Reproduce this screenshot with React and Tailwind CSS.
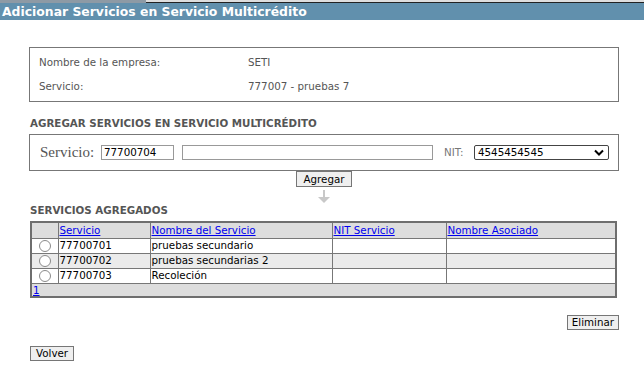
import React from "react";

const V = { fontFamily: '"DejaVu Sans", Verdana, sans-serif' };

function Radio() {
  return <span className="inline-block w-[12px] h-[12px] rounded-full border border-[#8a8a8a] bg-white align-middle" />;
}

export default function App() {
  const rows = [
    ["77700701", "pruebas secundario", "bg-white"],
    ["77700702", "pruebas secundarias 2", "bg-[#ebebeb]"],
    ["77700703", "Recoleción", "bg-white"],
  ];
  return (
    <div className="w-[644px] h-[390px] bg-white text-[10.3px] text-[#333]" style={V}>
      <div className="flex h-[3px]">
        <div className="w-[146px] bg-[#8d9aa5]" />
        <div className="flex-1 bg-[#dedede] border-b border-[#222]" />
      </div>
      <div className="h-[17px] bg-[#6190ad] text-white font-bold text-[12.4px] leading-[17px] pl-[2px] whitespace-nowrap">
        Adicionar Servicios en Servicio Multicrédito
      </div>

      <div className="pl-[29px] pr-[25px]">
        <div className="mt-[27px] h-[55px] border border-[#777] flex flex-col justify-center gap-[8px] pl-[9px] text-[#555]">
          <div className="flex"><span className="w-[209px]">Nombre de la empresa:</span><span>SETI</span></div>
          <div className="flex"><span className="w-[209px]">Servicio:</span><span>777007 - pruebas 7</span></div>
        </div>

        <div className="mt-[15px] font-bold text-[#555] pl-px leading-[13px]">AGREGAR SERVICIOS EN SERVICIO MULTICRÉDITO</div>
        <div className="mt-[4px] h-[37px] border border-[#777] flex items-center pl-[10px]">
          <span className="text-[15px] text-[#555] w-[61px]" style={{ fontFamily: '"Liberation Serif", serif' }}>Servicio:</span>
          <div className="w-[73px] h-[15px] border border-[#999] leading-[13px] pl-[2px] text-black">77700704</div>
          <div className="ml-[8px] w-[251px] h-[15px] border border-[#999]" />
          <span className="ml-[11px] w-[30px] text-[#777]">NIT:</span>
          <div className="w-[135px] h-[15px] border border-[#444] rounded-[2px] flex items-center justify-between pl-[3px] pr-[4px] text-black leading-[13px]">
            <span>4545454545</span>
            <svg width="10" height="7" viewBox="0 0 10 7"><path d="M1 1.5 L5 5.5 L9 1.5" stroke="#000" strokeWidth="2" fill="none" /></svg>
          </div>
        </div>
        <div className="flex flex-col items-center">
          <button className="mt-0 h-[16px] px-[6px] leading-[14px] bg-[#efefef] border border-[#767676] text-black text-[10.3px]" style={V}>Agregar</button>
          <svg className="mt-[3px]" width="14" height="14" viewBox="0 0 14 14">
            <rect x="6" y="0" width="2" height="8" fill="#c8c8c8" />
            <path d="M1 7 L13 7 L7 13 Z" fill="#c8c8c8" />
          </svg>
        </div>

        <div className="mt-0 font-bold text-[#555] pl-px leading-[13px]">SERVICIOS AGREGADOS</div>
        <table className="mt-[4px] ml-px w-[587px] border-2 border-[#6e6e6e] border-collapse leading-[13px]">
          <tbody>
            <tr className="bg-[#dddddd]">
              <td className="h-[16px] p-0 w-[27px] border border-[#777]" />
              <td className="h-[16px] p-0 w-[92px] border border-[#777] px-px"><span className="underline text-[#0000ee]">Servicio</span></td>
              <td className="h-[16px] p-0 w-[182px] border border-[#777] px-px"><span className="underline text-[#0000ee]">Nombre del Servicio</span></td>
              <td className="h-[16px] p-0 w-[114px] border border-[#777] px-px"><span className="underline text-[#0000ee]">NIT Servicio</span></td>
              <td className="h-[16px] p-0 border border-[#777] px-px"><span className="underline text-[#0000ee]">Nombre Asociado</span></td>
            </tr>
            {rows.map(([a, b, bg]) => (
              <tr key={a} className={bg}>
                <td className="h-[15px] p-0 border border-[#777] text-center leading-[12px]"><Radio /></td>
                <td className="h-[15px] p-0 border border-[#777] px-px text-black">{a}</td>
                <td className="h-[15px] p-0 border border-[#777] px-px text-black">{b}</td>
                <td className="h-[15px] p-0 border border-[#777]" />
                <td className="h-[15px] p-0 border border-[#777]" />
              </tr>
            ))}
            <tr className="bg-[#dddddd]">
              <td colSpan={5} className="h-[14px] p-0 px-px leading-[12px]"><span className="underline text-[#0000ee]">1</span></td>
            </tr>
          </tbody>
        </table>

        <div className="flex justify-end mt-[17px]">
          <button className="h-[15px] px-[4px] leading-[13px] bg-[#efefef] border border-[#767676] text-black text-[10.3px]" style={V}>Eliminar</button>
        </div>
        <div className="mt-[16px] pl-px">
          <button className="h-[15px] px-[5px] leading-[13px] bg-[#efefef] border border-[#767676] text-black text-[10.3px]" style={V}>Volver</button>
        </div>
      </div>
    </div>
  );
}
